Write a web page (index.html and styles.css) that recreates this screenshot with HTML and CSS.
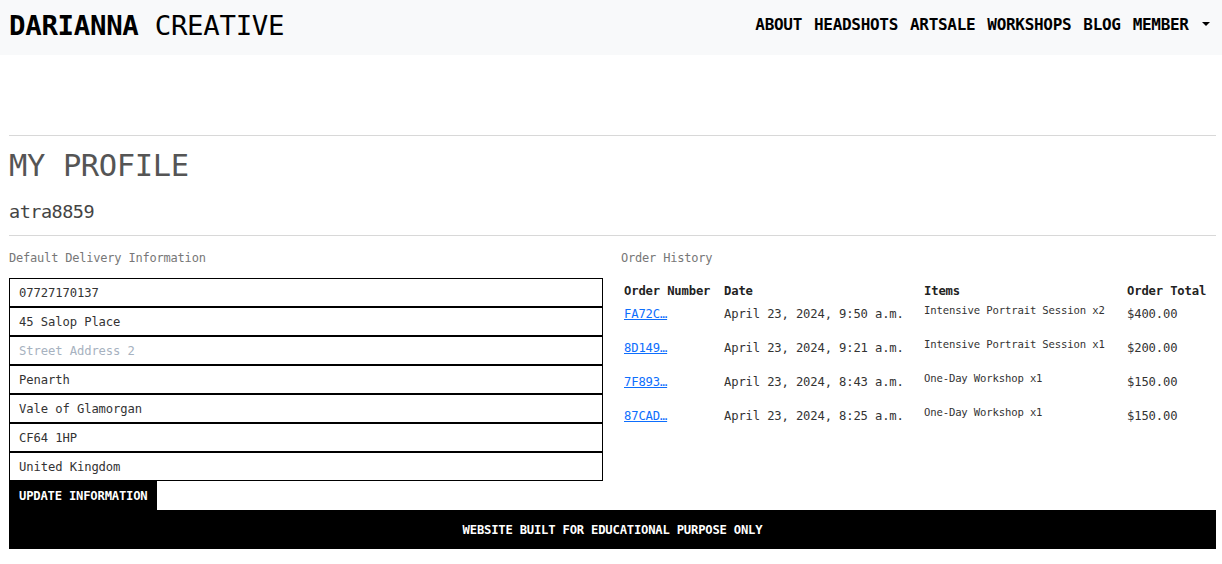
FILE: index.html
```html
<!DOCTYPE html>
<html lang="en">
<head>
<meta charset="utf-8">
<title>Darianna Creative - My Profile</title>
<link rel="stylesheet" href="styles.css">
</head>
<body>
<header class="topbar">
  <div class="brand"><strong>DARIANNA</strong> CREATIVE</div>
  <nav class="nav">
    <a href="#">ABOUT</a>
    <a href="#">HEADSHOTS</a>
    <a href="#">ARTSALE</a>
    <a href="#">WORKSHOPS</a>
    <a href="#">BLOG</a>
    <a href="#" class="dropdown">MEMBER <span class="caret"></span></a>
  </nav>
</header>
<main class="page">
  <hr class="rule">
  <h1 class="title">MY PROFILE</h1>
  <h2 class="username">atra8859</h2>
  <hr class="rule">
  <div class="cols">
    <section class="col">
      <p class="label">Default Delivery Information</p>
      <form class="form">
        <input class="field" value="07727170137">
        <input class="field" value="45 Salop Place">
        <input class="field" placeholder="Street Address 2">
        <input class="field" value="Penarth">
        <input class="field" value="Vale of Glamorgan">
        <input class="field" value="CF64 1HP">
        <input class="field" value="United Kingdom">
        <button type="button" class="btn">UPDATE INFORMATION</button>
      </form>
    </section>
    <section class="col">
      <p class="label">Order History</p>
      <table class="orders">
        <thead>
          <tr><th class="c-num">Order Number</th><th class="c-date">Date</th><th class="c-items">Items</th><th>Order Total</th></tr>
        </thead>
        <tbody>
          <tr><td><a href="#">FA72C…</a></td><td>April 23, 2024, 9:50 a.m.</td><td class="items">Intensive Portrait Session x2</td><td>$400.00</td></tr>
          <tr><td><a href="#">8D149…</a></td><td>April 23, 2024, 9:21 a.m.</td><td class="items">Intensive Portrait Session x1</td><td>$200.00</td></tr>
          <tr><td><a href="#">7F893…</a></td><td>April 23, 2024, 8:43 a.m.</td><td class="items">One-Day Workshop x1</td><td>$150.00</td></tr>
          <tr><td><a href="#">87CAD…</a></td><td>April 23, 2024, 8:25 a.m.</td><td class="items">One-Day Workshop x1</td><td>$150.00</td></tr>
        </tbody>
      </table>
    </section>
  </div>
  <footer class="footer">WEBSITE BUILT FOR EDUCATIONAL PURPOSE ONLY</footer>
</main>
</body>
</html>
```

FILE: styles.css
```css
* { box-sizing: border-box; }
body {
  margin: 0;
  font-family: "DejaVu Sans Mono", "Liberation Mono", monospace;
  color: #333;
  background: #fff;
}
.topbar {
  height: 55px;
  background: #f8f9fa;
  display: flex;
  align-items: center;
  justify-content: space-between;
  padding: 0 12px 0 9px;
}
.brand {
  font-size: 27.4px;
  color: #000;
  letter-spacing: -0.3px;
  font-weight: 400;
  margin-top: -4px;
}
.brand strong { font-weight: 700; }
.nav {
  display: flex;
  gap: 12px;
  margin-top: -6px;
}
.nav a {
  font-size: 16px;
  font-weight: 700;
  color: #000;
  text-decoration: none;
  letter-spacing: -0.3px;
}
.caret {
  display: inline-block;
  width: 0;
  height: 0;
  border-left: 4px solid transparent;
  border-right: 4px solid transparent;
  border-top: 4px solid #000;
  vertical-align: middle;
  margin-left: 4px;
  margin-bottom: 3px;
}
.page {
  padding: 0 6px 0 9px;
}
.rule {
  border: 0;
  border-top: 1px solid #d8d8d8;
  margin: 0;
}
.page > .rule:first-child { margin-top: 80px; }
.title {
  font-size: 30.5px;
  font-weight: 400;
  color: #555;
  margin: 12px 0 0;
  line-height: 36px;
  letter-spacing: -0.4px;
}
.username {
  font-size: 18.5px;
  font-weight: 500;
  color: #444;
  margin: 16px 0 0;
  line-height: 24px;
  letter-spacing: -0.5px;
}
.username + .rule { margin-top: 11px; }
.cols {
  display: grid;
  grid-template-columns: 594px 1fr;
  column-gap: 18px;
}
.label {
  font-size: 12px;
  color: #777;
  margin: 15px 0 0;
  line-height: 14px;
  letter-spacing: -0.2px;
}
.form {
  display: flex;
  flex-direction: column;
  align-items: flex-start;
  margin-top: 13px;
}
.field {
  display: block;
  width: 100%;
  height: 29px;
  border: 1px solid #000;
  border-radius: 0;
  padding: 0 9px;
  font-family: inherit;
  font-size: 12.2px;
  color: #333;
  letter-spacing: -0.1px;
  background: #fff;
}
.field::placeholder { color: #a7b2c0; }
.btn {
  height: 29px;
  background: #000;
  color: #fff;
  border: 0;
  border-radius: 0;
  font-family: inherit;
  font-weight: 700;
  font-size: 12.2px;
  padding: 0 10px;
  letter-spacing: -0.2px;
}
.orders {
  border-collapse: collapse;
  margin-top: 15px;
  width: 100%;
  font-size: 12.2px;
  letter-spacing: -0.15px;
}
.orders th {
  text-align: left;
  font-weight: 700;
  padding: 4px 3px 2px 3px;
  line-height: 14px;
  color: #222;
}
.orders th.c-num { width: 100px; }
.orders th.c-date { width: 200px; }
.orders th.c-items { width: 203px; }
.orders td {
  padding: 6px 3px 3px;
  height: 34px;
  vertical-align: top;
  line-height: 16px;
  color: #333;
}
.orders td a { color: #0d6efd; text-decoration: underline; }
.orders td.items {
  font-size: 10.6px;
  line-height: 12px;
  padding-top: 4px;
}
.footer {
  background: #000;
  color: #fff;
  font-weight: 700;
  font-size: 12.2px;
  text-align: center;
  height: 39px;
  line-height: 41px;
  letter-spacing: -0.2px;
}
```
